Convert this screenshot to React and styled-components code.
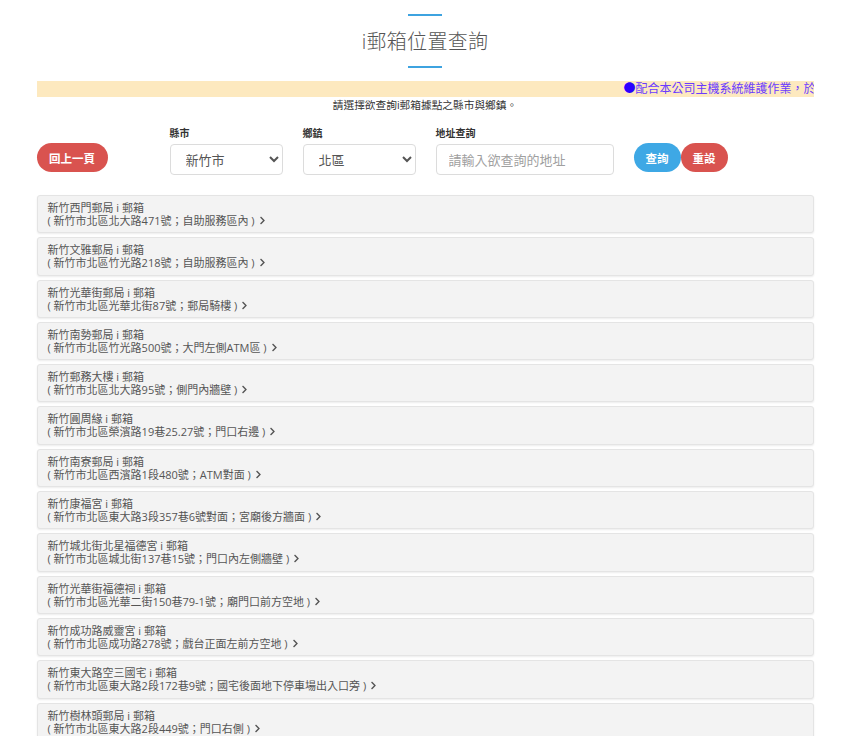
import styled, { createGlobalStyle } from 'styled-components';
import { FaChevronRight } from 'react-icons/fa';

const boxes = [
    ['新竹西門郵局 i 郵箱', '新竹市北區北大路471號；自助服務區內'],
    ['新竹文雅郵局 i 郵箱', '新竹市北區竹光路218號；自助服務區內'],
    ['新竹光華街郵局 i 郵箱', '新竹市北區光華北街87號；郵局騎樓'],
    ['新竹南勢郵局 i 郵箱', '新竹市北區竹光路500號；大門左側ATM區'],
    ['新竹郵務大樓 i 郵箱', '新竹市北區北大路95號；側門內牆壁'],
    ['新竹圓周緣 i 郵箱', '新竹市北區榮濱路19巷25.27號；門口右邊'],
    ['新竹南寮郵局 i 郵箱', '新竹市北區西濱路1段480號；ATM對面'],
    ['新竹康福宮 i 郵箱', '新竹市北區東大路3段357巷6號對面；宮廟後方牆面'],
    ['新竹城北街北星福德宮 i 郵箱', '新竹市北區城北街137巷15號；門口內左側牆壁'],
    ['新竹光華街福德祠 i 郵箱', '新竹市北區光華二街150巷79-1號；廟門口前方空地'],
    ['新竹成功路威靈宮 i 郵箱', '新竹市北區成功路278號；戲台正面左前方空地'],
    ['新竹東大路空三國宅 i 郵箱', '新竹市北區東大路2段172巷9號；國宅後面地下停車場出入口旁'],
    ['新竹樹林頭郵局 i 郵箱', '新竹市北區東大路2段449號；門口右側'],
];

export default function App() {
    return (
        <>
            <GlobalStyle />
            <Page>
                <Header>
                    <Line />
                    <Title>i郵箱位置查詢</Title>
                    <Line />
                </Header>

                <Marquee>
                    <span><Dot>●</Dot>配合本公司主機系統維護作業，於</span>
                </Marquee>
                <Hint>請選擇欲查詢i郵箱據點之縣市與鄉鎮。</Hint>

                <Form>
                    <PillButton color="#d9534f" wide>回上一頁</PillButton>
                    <Fields>
                        <Field>
                            <Label>縣市</Label>
                            <Select defaultValue="新竹市" width="113px">
                                <option>新竹市</option>
                            </Select>
                        </Field>
                        <Field>
                            <Label>鄉鎮</Label>
                            <Select defaultValue="北區" width="113px">
                                <option>北區</option>
                            </Select>
                        </Field>
                        <Field>
                            <Label>地址查詢</Label>
                            <Input placeholder="請輸入欲查詢的地址" />
                        </Field>
                        <Buttons>
                            <PillButton color="#3ea8e5">查詢</PillButton>
                            <PillButton color="#d9534f">重設</PillButton>
                        </Buttons>
                    </Fields>
                </Form>

                <List>
                    {boxes.map(([name, addr]) => (
                        <Item key={name}>
                            <div>{name}</div>
                            <div>
                                ( {addr} )
                                <Arrow><FaChevronRight /></Arrow>
                            </div>
                        </Item>
                    ))}
                </List>
            </Page>
        </>
    )
};

const GlobalStyle = createGlobalStyle`
    html, body {
        margin: 0;
        background: #fff;
    }
    body {
        font-family: "Open Sans", "Noto Sans CJK TC", sans-serif;
        color: #555;
    }
    ::-webkit-scrollbar {
        width: 0;
    }
`;

const Page = styled.div`
    width: 777px;
    margin: 0 auto;
    padding-top: 14px;
`;

const Header = styled.div`
    display: flex;
    flex-direction: column;
    align-items: center;
`;

const Line = styled.div`
    width: 34px;
    height: 2px;
    background-color: #3ea3e0;
`;

const Title = styled.h1`
    margin: 12px 0 10px;
    font-size: 20px;
    font-weight: 300;
    line-height: 28px;
    color: #555;
    letter-spacing: 0.3px;
`;

const Marquee = styled.div`
    margin-top: 13px;
    height: 16px;
    background-color: #fde9bf;
    overflow: hidden;
    white-space: nowrap;
    font-size: 12px;
    line-height: 16px;
    color: #6a3bff;
    padding-left: 587px;
`;

const Dot = styled.span`
    color: #2a00ff;
`;

const Hint = styled.div`
    margin-top: 2px;
    text-align: center;
    font-size: 10.7px;
    line-height: 12px;
    color: #333;
`;

const Form = styled.div`
    margin-top: 16px;
    display: flex;
    align-items: flex-end;
`;

const Fields = styled.div`
    margin-left: 62px;
    display: flex;
    align-items: flex-end;
    gap: 20px;
`;

const Field = styled.div`
    display: flex;
    flex-direction: column;
`;

const Label = styled.label`
    font-size: 10px;
    font-weight: 700;
    line-height: 12px;
    color: #333;
    margin-bottom: 5px;
`;

const Select = styled.select`
    width: ${p => p.width};
    height: 31px;
    padding: 0 8px 0 11px;
    border: 1px solid #dcdcdc;
    border-radius: 4px;
    background-color: #fff;
    font-family: inherit;
    font-size: 13px;
    color: #555;
`;

const Input = styled.input`
    width: 178px;
    height: 31px;
    box-sizing: border-box;
    padding: 0 12px;
    border: 1px solid #dcdcdc;
    border-radius: 4px;
    font-family: inherit;
    font-size: 13px;
    color: #555;
    outline: none;

    &::placeholder {
        color: #a0a0a0;
    }
`;

const Buttons = styled.div`
    display: flex;
    margin-bottom: 3px;
`;

const PillButton = styled.button`
    width: ${p => (p.wide ? '71px' : '47px')};
    height: 29px;
    margin-bottom: ${p => (p.wide ? '3px' : '0')};
    border: none;
    border-radius: 15px;
    background-color: ${p => p.color};
    color: #fff;
    font-family: inherit;
    font-size: 11.5px;
    font-weight: 700;
    padding: 0;
`;

const List = styled.div`
    margin-top: 20px;
    display: flex;
    flex-direction: column;
    gap: 4px;
`;

const Item = styled.div`
    padding: 5px 10px 5.3px;
    border: 1px solid #e4e4e4;
    border-radius: 3px;
    background-color: #f3f3f3;
    box-shadow: 0 1px 2px rgba(0, 0, 0, 0.08);
    font-size: 11px;
    line-height: 13px;
    color: #555;
`;

const Arrow = styled.span`
    display: inline-flex;
    margin-left: 3px;
    font-size: 9px;
    color: #555;
`;
